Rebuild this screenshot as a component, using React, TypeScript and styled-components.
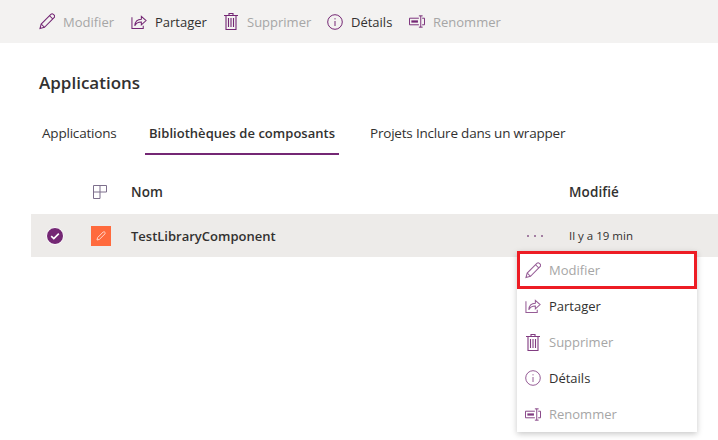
import React from "react";
import styled, { createGlobalStyle } from "styled-components";

const GlobalStyle = createGlobalStyle`
  html, body {
    margin: 0;
    padding: 0;
    width: 718px;
    height: 440px;
    overflow: hidden;
    background: #fff;
    font-family: "Open Sans", "Noto Sans", "Liberation Sans", sans-serif;
    color: #323130;
  }
`;

const PURPLE = "#742774";

const Page = styled.div`
  width: 718px;
  height: 440px;
  overflow: hidden;
`;

const Toolbar = styled.div`
  display: flex;
  align-items: center;
  height: 43px;
  padding-left: 39px;
  background: #f3f2f1;
`;

const ToolButton = styled.div<{ $width: number }>`
  display: flex;
  align-items: center;
  width: ${(p) => p.$width}px;
  flex: none;
`;

const IconSlot = styled.span<{ $gap: number }>`
  display: flex;
  align-items: center;
  justify-content: center;
  flex: none;
  width: 16px;
  height: 18px;
  margin-right: ${(p) => p.$gap}px;
`;

const Label = styled.span<{ $disabled?: boolean }>`
  font-size: 13px;
  line-height: 18px;
  white-space: nowrap;
  color: ${(p) => (p.$disabled ? "#a6a6a6" : "#323130")};
`;

const Heading = styled.h1`
  margin: 29px 0 0 39px;
  font-size: 17px;
  line-height: 22px;
  font-weight: 600;
  color: #323130;
`;

const Tabs = styled.div`
  display: flex;
  margin: 18px 0 0 39px;
  height: 43px;
`;

const Tab = styled.div<{ $active?: boolean; $width: number; $inset: number }>`
  flex: none;
  box-sizing: border-box;
  width: ${(p) => p.$width}px;
  height: 43px;
  padding: 12px 0 0 ${(p) => p.$inset}px;
  font-size: ${(p) => (p.$active ? 13 : 13.5)}px;
  line-height: 18px;
  letter-spacing: ${(p) => (p.$active ? 0.03 : -0.2)}px;
  white-space: nowrap;
  font-weight: ${(p) => (p.$active ? 600 : 400)};
  border-bottom: 2px solid ${(p) => (p.$active ? PURPLE : "transparent")};
`;

const HeaderRow = styled.div`
  display: grid;
  grid-template-columns: 62px 38px 438px 1fr;
  align-items: center;
  height: 38px;
  margin: 18px 0 0 31px;
  font-size: 13.5px;
  font-weight: 600;
  letter-spacing: 0.1px;
`;

const ColumnsCell = styled.span`
  display: flex;
`;

const FileRow = styled.div`
  position: relative;
  display: grid;
  grid-template-columns: 60px 40px 396px 42px 1fr;
  align-items: center;
  height: 43px;
  margin: 3px 0 0 31px;
  background: #edebe9;
  font-size: 13px;
`;

const CheckCell = styled.span`
  display: flex;
  padding-left: 15px;
`;

const AppTile = styled.span`
  display: flex;
  align-items: center;
  justify-content: center;
  width: 20px;
  height: 20px;
  background: #ff6a3d;
`;

const Name = styled.span`
  font-weight: 600;
  white-space: nowrap;
`;

const Dots = styled.span`
  display: flex;
  gap: 5px;
`;

const Dot = styled.i`
  width: 2px;
  height: 2px;
  border-radius: 50%;
  background: #8a5a8a;
`;

const Time = styled.span`
  font-size: 11.5px;
  white-space: nowrap;
`;

const Menu = styled.div`
  position: absolute;
  top: 37px;
  left: 486px;
  width: 180px;
  padding-top: 1px;
  background: #fff;
  box-shadow: 0 2px 6px rgba(0, 0, 0, 0.22);
`;

const MenuItem = styled.div<{ $marked?: boolean }>`
  position: relative;
  display: flex;
  align-items: center;
  height: 36px;
  padding-left: 8px;
  ${(p) =>
    p.$marked &&
    `
    &::after {
      content: "";
      position: absolute;
      inset: -1px 0 -1px 0;
      border: 3px solid #ed1c24;
    }
  `}
`;

type IconProps = { opacity?: number };

const Pencil = ({ opacity = 1 }: IconProps) => (
  <svg width="17" height="17" viewBox="0 0 17 17" fill="none" stroke={PURPLE} strokeWidth="1.1" opacity={opacity}>
    <path d="M1 16l1.3-4.8L12.6 1c.8-.8 1.9-.8 2.6-.1l.9.9c.7.7.7 1.8-.1 2.6L5.8 14.7 1 16z" />
    <path d="M2.4 11.2l3.4 3.4M11.2 2.4l3.4 3.4" />
  </svg>
);

const Share = ({ opacity = 1 }: IconProps) => (
  <svg width="17" height="16" viewBox="0 0 17 16" fill="none" stroke={PURPLE} strokeWidth="1.1" opacity={opacity}>
    <path d="M1 3v12h12v-3" />
    <path d="M4 12c.3-4 2.8-7 7-7V2l5 4.5L11 11V8c-3 0-5.5 1-7 4z" />
  </svg>
);

const Trash = ({ opacity = 1 }: IconProps) => (
  <svg width="14" height="17" viewBox="0 0 14 17" fill="none" stroke={PURPLE} strokeWidth="1.1" opacity={opacity}>
    <path d="M0 2.5h14M2 2.5V16.5h10V2.5M5 2.5V.5h4v2" />
    <path d="M4.5 5v9M7 5v9M9.5 5v9" />
  </svg>
);

const Info = ({ opacity = 1 }: IconProps) => (
  <svg width="16" height="16" viewBox="0 0 16 16" fill="none" stroke={PURPLE} strokeWidth="1" opacity={opacity}>
    <circle cx="8" cy="8" r="7.3" />
    <path d="M8 7v5" />
    <path d="M8 4.2v1.2" />
  </svg>
);

const Rename = ({ opacity = 1 }: IconProps) => (
  <svg width="17" height="13" viewBox="0 0 17 13" fill="none" stroke={PURPLE} opacity={opacity}>
    <path d="M10.5 3H.5v7h10" />
    <path d="M2.5 6.5h7" strokeWidth="2.4" />
    <path d="M10.5.5h4M10.5 12.5h4M12.5.5v12M14 3h2.5v7H14" />
  </svg>
);

const ColumnsIcon = () => (
  <svg width="14" height="14" viewBox="0 0 14 14" fill="none" stroke="#7d6f8c" strokeWidth="1">
    <path d="M.5.5h6.5v13H.5zM7 .5h6.5V7H.5" />
  </svg>
);

const CheckBadge = () => (
  <svg width="18" height="18" viewBox="0 0 18 18">
    <circle cx="9" cy="9" r="8.5" fill={PURPLE} stroke="#fff" strokeWidth="1" />
    <path d="M5.2 9.2l2.6 2.4 5-5" fill="none" stroke="#fff" strokeWidth="1.6" />
  </svg>
);

const TilePencil = () => (
  <svg width="10" height="10" viewBox="0 0 10 10" fill="none" stroke="#ffd9cc" strokeWidth="1">
    <path d="M1 9l.6-2.4L7.2 1c.4-.4 1-.4 1.4 0l.4.4c.4.4.4 1 0 1.4L3.4 8.4 1 9z" />
  </svg>
);

const toolbarItems = [
  { label: "Modifier", Icon: Pencil, disabled: true, width: 92 },
  { label: "Partager", Icon: Share, disabled: false, width: 92 },
  { label: "Supprimer", Icon: Trash, disabled: true, width: 104 },
  { label: "Détails", Icon: Info, disabled: false, width: 82 },
  { label: "Renommer", Icon: Rename, disabled: true, width: 100 },
];

export default function App() {
  return (
    <Page>
      <GlobalStyle />
      <Toolbar>
        {toolbarItems.map(({ label, Icon, disabled, width }) => (
          <ToolButton key={label} $width={width}>
            <IconSlot $gap={8}>
              <Icon />
            </IconSlot>
            <Label $disabled={disabled}>{label}</Label>
          </ToolButton>
        ))}
      </Toolbar>
      <Heading>Applications</Heading>
      <Tabs>
        <Tab $width={106} $inset={3}>Applications</Tab>
        <Tab $active $width={194} $inset={4}>Bibliothèques de composants</Tab>
        <Tab $width={230} $inset={31}>Projets Inclure dans un wrapper</Tab>
      </Tabs>
      <HeaderRow>
        <span />
        <ColumnsCell><ColumnsIcon /></ColumnsCell>
        <span>Nom</span>
        <span>Modifié</span>
      </HeaderRow>
      <FileRow>
        <CheckCell><CheckBadge /></CheckCell>
        <AppTile><TilePencil /></AppTile>
        <Name>TestLibraryComponent</Name>
        <Dots><Dot /><Dot /><Dot /></Dots>
        <Time>Il y a 19 min</Time>
        <Menu>
          {toolbarItems.map(({ label, Icon, disabled }, i) => (
            <MenuItem key={label} $marked={i === 0}>
              <IconSlot $gap={8}>
                <Icon opacity={i === 0 || i === 1 || i === 3 ? 0.75 : 0.9} />
              </IconSlot>
              <Label $disabled={disabled}>{label}</Label>
            </MenuItem>
          ))}
        </Menu>
      </FileRow>
    </Page>
  );
}
